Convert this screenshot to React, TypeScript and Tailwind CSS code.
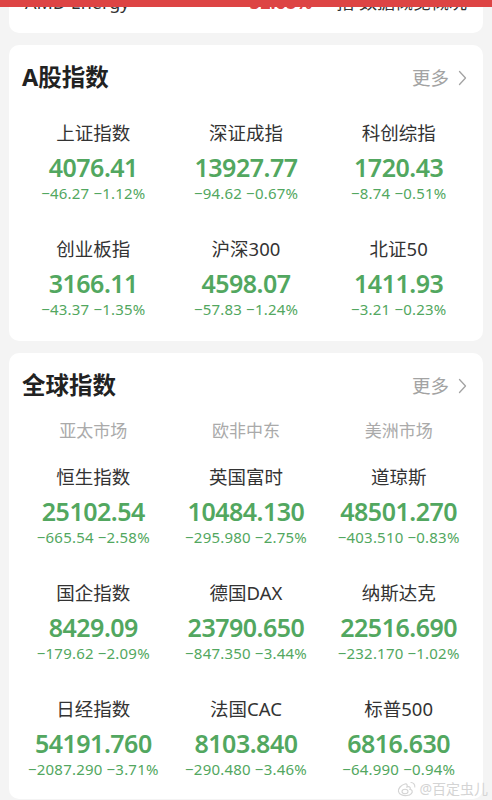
const aShares = [
  { name: '上证指数', price: '4076.41', change: '−46.27 −1.12%' },
  { name: '深证成指', price: '13927.77', change: '−94.62 −0.67%' },
  { name: '科创综指', price: '1720.43', change: '−8.74 −0.51%' },
  { name: '创业板指', price: '3166.11', change: '−43.37 −1.35%' },
  { name: '沪深300', price: '4598.07', change: '−57.83 −1.24%' },
  { name: '北证50', price: '1411.93', change: '−3.21 −0.23%' },
]

const globals = [
  { name: '恒生指数', price: '25102.54', change: '−665.54 −2.58%' },
  { name: '英国富时', price: '10484.130', change: '−295.980 −2.75%' },
  { name: '道琼斯', price: '48501.270', change: '−403.510 −0.83%' },
  { name: '国企指数', price: '8429.09', change: '−179.62 −2.09%' },
  { name: '德国DAX', price: '23790.650', change: '−847.350 −3.44%' },
  { name: '纳斯达克', price: '22516.690', change: '−232.170 −1.02%' },
  { name: '日经指数', price: '54191.760', change: '−2087.290 −3.71%' },
  { name: '法国CAC', price: '8103.840', change: '−290.480 −3.46%' },
  { name: '标普500', price: '6816.630', change: '−64.990 −0.94%' },
]

type Quote = { name: string; price: string; change: string }

const Cell = ({ q }: { q: Quote }) => (
  <div className="flex flex-col items-center">
    <div className="text-[18.5px] leading-[24px] text-[#333]">{q.name}</div>
    <div className="mt-[6px] text-[25px] leading-[32px] font-semibold text-[#52a760] tracking-[-0.5px]">{q.price}</div>
    <div className="text-[15px] leading-[20px] text-[#52a760] tracking-[0.2px]">{q.change}</div>
  </div>
)

const Header = ({ title }: { title: string }) => (
  <div className="flex items-center justify-between pl-[13px] pr-[16px] h-[30px]">
    <div className="text-[23.5px] font-bold text-[#222]">{title}</div>
    <div className="flex items-center gap-[9px] text-[18.5px] text-[#a3a3a3]">
      更多
      <svg width="9" height="16" viewBox="0 0 9 16" fill="none">
        <path d="M1.5 1.5 L7.5 8 L1.5 14.5" stroke="#a3a3a3" strokeWidth="1.3" strokeLinecap="round" strokeLinejoin="round" />
      </svg>
    </div>
  </div>
)

const App = () => {
  return (
    <div
      className="relative w-[492px] h-[800px] overflow-hidden bg-[#f4f4f4]"
      style={{ fontFamily: '"Noto Sans", "Noto Sans CJK SC", sans-serif' }}
    >
      <div className="absolute top-0 left-0 right-0 h-[7px] bg-[#dd4444] z-10"></div>

      <div className="px-[9px]">
        {/* cut off card above */}
        <div className="h-[33px] bg-white rounded-b-[10px] overflow-hidden">
          <div className="flex items-center -mt-[10px] px-[16px] text-[18px] leading-[24px]">
            <span className="text-[#333]">AMD Energy</span>
            <span className="ml-auto text-[#dd4444] font-bold">−32.68%</span>
            <span className="ml-[24px] text-[#333]">指 数据概览概况</span>
          </div>
        </div>

        <div className="mt-[12px] bg-white rounded-[10px] pt-[18px] pb-[22px]">
          <Header title="A股指数" />
          <div className="mt-[28px] px-[8px] grid grid-cols-3 gap-y-[34px]">
            {aShares.map((q) => (
              <Cell key={q.name} q={q} />
            ))}
          </div>
        </div>

        <div className="mt-[12px] bg-white rounded-[10px] pt-[18px] pb-[20px]">
          <Header title="全球指数" />
          <div className="mt-[19px] px-[8px] grid grid-cols-3 text-[17px] leading-[22px] text-[#aaa] text-center">
            <div>亚太市场</div>
            <div>欧非中东</div>
            <div>美洲市场</div>
          </div>
          <div className="mt-[23px] px-[8px] grid grid-cols-3 gap-y-[34px]">
            {globals.map((q) => (
              <Cell key={q.name} q={q} />
            ))}
          </div>
        </div>
      </div>

      <div className="absolute right-[4px] bottom-[3px] flex items-center gap-[2px] text-[14px] leading-[16px] text-[#d4d4d4]">
        <svg width="20" height="17" viewBox="0 0 20 17" fill="none">
          <path d="M8 4 C4 5 1 8.5 1.5 11.5 C2 14.5 6 16 10 15.5 C14 15 16 12.5 15 10.5 C14.5 9.5 13 9.5 13 9.5 C14 7.5 12.5 6 10 7 C10.5 5 10 3.5 8 4 Z" stroke="#d4d4d4" strokeWidth="1.2" />
          <ellipse cx="8" cy="11.5" rx="3" ry="2.2" stroke="#d4d4d4" strokeWidth="1.1" />
          <path d="M14 2.5 C16.5 2.5 18 4.5 17.8 7" stroke="#d4d4d4" strokeWidth="1.1" strokeLinecap="round" />
        </svg>
        <span>@百定虫儿</span>
      </div>
    </div>
  )
}

export default App
